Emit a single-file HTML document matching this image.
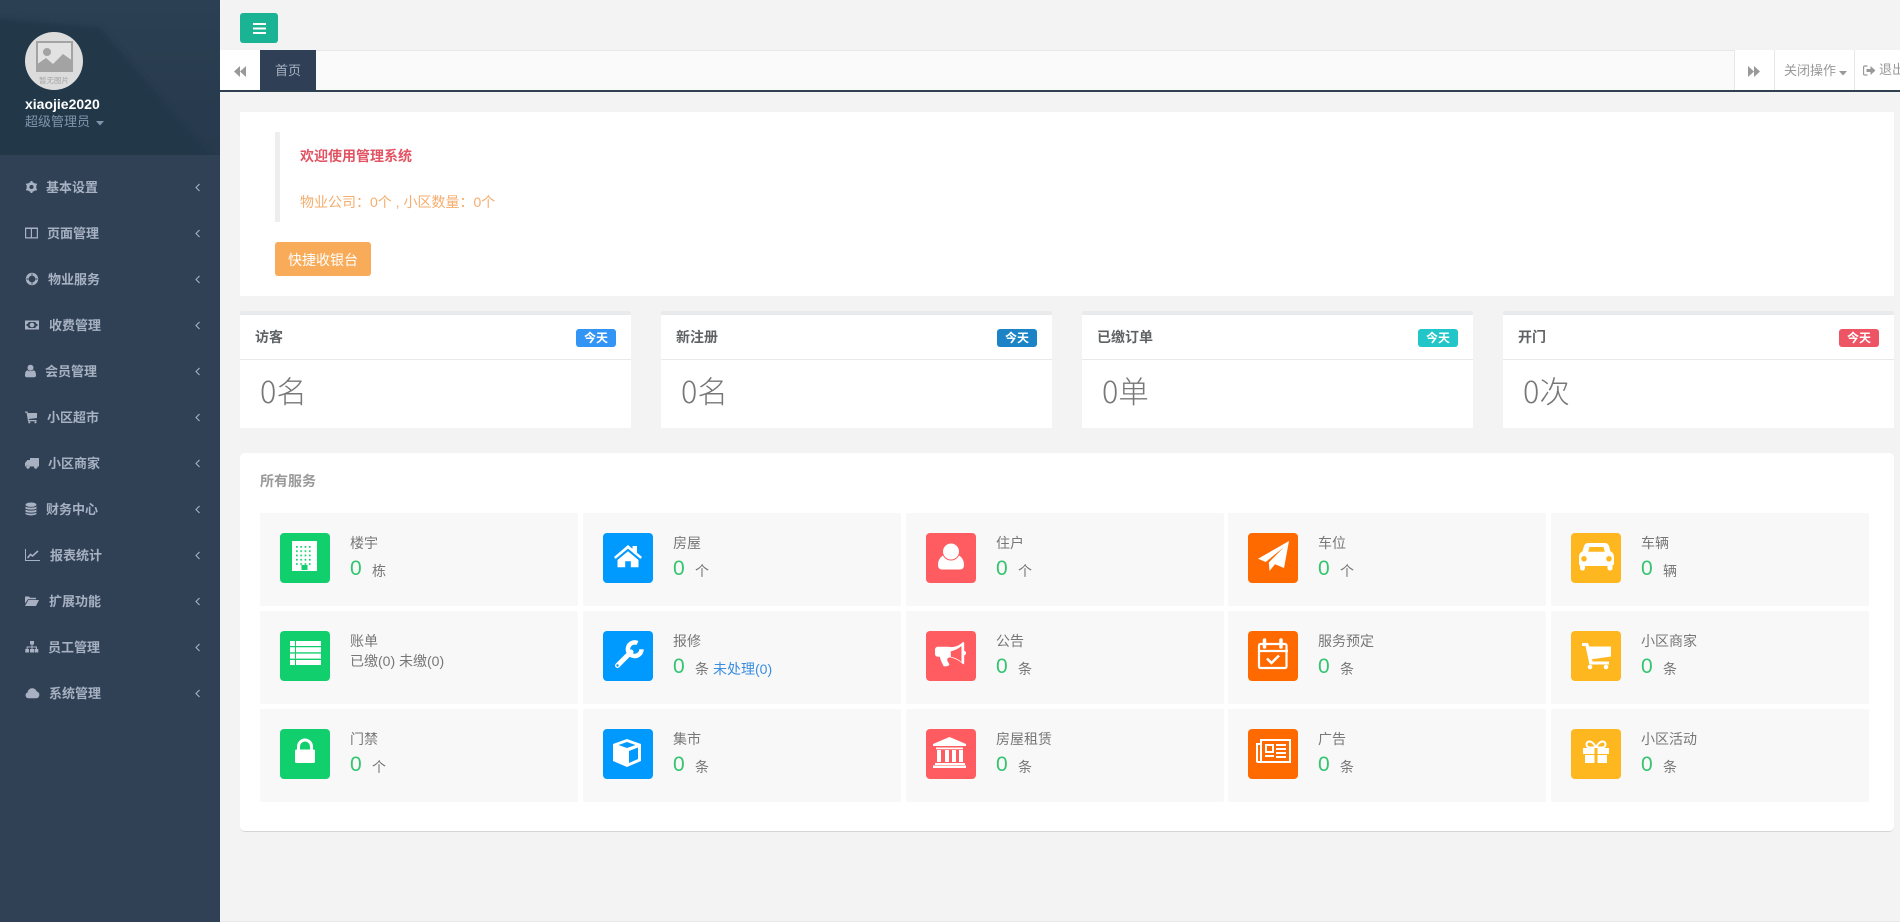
<!DOCTYPE html>
<html lang="zh-CN">
<head>
<meta charset="utf-8">
<title>管理系统</title>
<style>
*{box-sizing:border-box}
html,body{margin:0;padding:0;width:1900px;height:922px;overflow:hidden;background:#f3f3f4}
body{position:relative;font-family:"Liberation Sans","Noto Sans CJK SC",sans-serif;font-size:13px;color:#676a6c}
.a,.t{position:absolute}
.t{white-space:nowrap}
svg{display:block;position:absolute}
#side{position:absolute;left:0;top:0;width:220px;height:922px;background:#304156;overflow:hidden}
.m{position:absolute;left:0;width:220px;height:46px;color:#a7b1c2;font-weight:700;font-size:13px;line-height:47px}
.m span{position:absolute;white-space:nowrap}
.m svg{left:25px;top:16px;fill:#a7b1c2}
.m .ch{left:194.500px;top:19px;fill:none;stroke:#a7b1c2;stroke-width:1.1}
.card{position:absolute;top:311px;width:391px;height:117px;background:#fff;border-top:4px solid #e9eaeb;border-radius:2px 2px 0 0}
.card .h{position:absolute;left:0;right:0;top:0;height:45px;border-bottom:1px solid #e7eaec}
.card b{position:absolute;left:15px;top:12px;font-size:14px;line-height:20px;color:#5f6264}
.card i{position:absolute;right:15px;top:14px;width:40px;height:18px;border-radius:3px;color:#fff;font-style:normal;font-weight:700;font-size:12px;line-height:18px;text-align:center}
.card p{position:absolute;margin:0;left:20px;top:52px;font-family:"Noto Sans CJK SC",sans-serif;font-size:30.500px;line-height:46px;font-weight:200;color:#777;white-space:nowrap}
.cell{position:absolute;width:318px;height:93px;background:#f8f8f8;border-radius:2px}
.ic{position:absolute;left:20px;top:20px;width:50px;height:50px;border-radius:4px}
.ic svg{left:0;top:0;fill:#fff}
.lb{position:absolute;left:90px;top:20px;font-size:14px;line-height:20px;color:#777;white-space:nowrap}
.nm{position:absolute;left:90px;top:43px;font-size:21px;line-height:26px;color:#35c46f;white-space:nowrap}
.un{position:absolute;left:112px;top:48px;font-size:14px;line-height:20px;color:#777;white-space:nowrap}
.g{background:#12cf6e}.b{background:#0099fd}.r{background:#ff5c61}.o{background:#ff6a00}.y{background:#ffb71f}
</style>
</head>
<body>
<div id="side">
  <svg width="220" height="155" style="left:0;top:0"><defs><linearGradient id="hg" x1="0" y1="0" x2="0" y2="1"><stop offset="0" stop-color="#2b4053"/><stop offset="1" stop-color="#27394c"/></linearGradient><filter id="bl"><feGaussianBlur stdDeviation="2.500"/></filter></defs><rect width="220" height="155" fill="url(#hg)"/><polygon points="-5,18 100,27 215,160 -5,160" fill="#24384a" filter="url(#bl)"/></svg>
  <div class="a" style="left:25px;top:32px;width:58px;height:58px;border-radius:50%;background:#dcdcdc;overflow:hidden">
    <svg width="58" height="58" style="left:0;top:0"><rect x="12" y="10" width="35" height="29" fill="#e2e2e2" stroke="#a3a3a3" stroke-width="2"/><circle cx="22" cy="20" r="4" fill="#a3a3a3"/><polygon points="11,33 21,26 28,32 38,22 48,29 48,40 11,40" fill="#a3a3a3"/></svg>
    <span class="t" style="left:14px;top:44px;font-size:7.500px;line-height:10px;color:#a5a5a5">暂无图片</span>
  </div>
  <span class="t" style="left:25px;top:94px;font-size:14px;line-height:20px;font-weight:700;color:#fff">xiaojie2020</span>
  <span class="t" style="left:25px;top:112px;font-size:13px;line-height:20px;color:#8095ab">超级管理员</span>
  <svg width="8" height="5" style="left:96px;top:121px"><polygon points="0,0 8,0 4,4.500" fill="#8095ab"/></svg>

  <div class="m" style="top:164px"><svg width="14" height="14" viewBox="0 0 14 14"><circle cx="6.500" cy="7" r="3.600" fill="none" stroke="#a7b1c2" stroke-width="2.600"/><path d="M6.500 7L6.500 1M6.500 7L6.500 13M6.500 7L1.300 4M6.500 7L11.700 10M6.500 7L1.300 10M6.500 7L11.700 4" stroke="#a7b1c2" stroke-width="2" fill="none" stroke-dasharray="6 0"/><circle cx="6.500" cy="7" r="2" fill="#304156"/></svg><span style="left:46px">基本设置</span><svg class="ch" width="6" height="9"><polyline points="4.500,1 1,4.500 4.500,8"/></svg></div>
  <div class="m" style="top:210px"><svg width="14" height="14" viewBox="0 0 14 14"><path fill-rule="evenodd" d="M0 1.500h13v11H0zM1.200 3v8.300h4.600V3zM7 3v8.300h4.800V3z"/></svg><span style="left:47px">页面管理</span><svg class="ch" width="6" height="9"><polyline points="4.500,1 1,4.500 4.500,8"/></svg></div>
  <div class="m" style="top:256px"><svg width="14" height="14" viewBox="0 0 14 14"><circle cx="7" cy="7" r="4.800" fill="none" stroke="#a7b1c2" stroke-width="2.800"/><path d="M1.500 7h2M10.500 7h2M7 1.500v2M7 10.500v2" stroke="#304156" stroke-width=".9"/></svg><span style="left:48px">物业服务</span><svg class="ch" width="6" height="9"><polyline points="4.500,1 1,4.500 4.500,8"/></svg></div>
  <div class="m" style="top:302px"><svg width="14" height="14" viewBox="0 0 14 14"><path fill-rule="evenodd" d="M0 2.500h14v9H0zM3.500 4A1.800 1.800 0 0 1 1.500 6v2a1.800 1.800 0 0 1 2 2h7a1.800 1.800 0 0 1 2-2V6a1.800 1.800 0 0 1-2-2zM7 4.700a2.300 2.300 0 1 1 0 4.600 2.300 2.300 0 0 1 0-4.600z"/></svg><span style="left:49px">收费管理</span><svg class="ch" width="6" height="9"><polyline points="4.500,1 1,4.500 4.500,8"/></svg></div>
  <div class="m" style="top:348px"><svg width="12" height="14" viewBox="0 0 12 14"><circle cx="5.500" cy="3.800" r="3"/><path d="M0 11.500c0-3.500 1-5 2.500-5.300 1.600 1.300 4.400 1.300 6 0 1.500.3 2.500 1.800 2.500 5.300 0 1-.7 1.800-1.800 1.800H1.800C.7 13.300 0 12.500 0 11.500z"/></svg><span style="left:45px">会员管理</span><svg class="ch" width="6" height="9"><polyline points="4.500,1 1,4.500 4.500,8"/></svg></div>
  <div class="m" style="top:394px"><svg width="14" height="14" viewBox="0 0 14 14"><path d="M0 1.500h2.500l.4 1.500H12v5L3.800 9l.2 1h7.500v1.200H3L1.600 2.800H0z"/><circle cx="4.300" cy="12.300" r="1.100"/><circle cx="10.500" cy="12.300" r="1.100"/></svg><span style="left:47px">小区超市</span><svg class="ch" width="6" height="9"><polyline points="4.500,1 1,4.500 4.500,8"/></svg></div>
  <div class="m" style="top:440px"><svg width="14" height="14" viewBox="0 0 14 14"><path d="M5 2h9v8.500H4.500a1.800 1.800 0 0 0-3.500 0H0V7l2.500-3H5z"/><circle cx="3" cy="11" r="1.700"/><circle cx="10.800" cy="11" r="1.700"/></svg><span style="left:48px">小区商家</span><svg class="ch" width="6" height="9"><polyline points="4.500,1 1,4.500 4.500,8"/></svg></div>
  <div class="m" style="top:486px"><svg width="12" height="14" viewBox="0 0 12 14"><ellipse cx="6" cy="2.700" rx="5.500" ry="2.200"/><path d="M.5 4.500C1.500 6 10.500 6 11.500 4.500V6.500C10.500 8 1.500 8 .5 6.500z"/><path d="M.5 7.500C1.500 9 10.500 9 11.500 7.500V9.500C10.500 11 1.500 11 .5 9.500z"/><path d="M.5 10.500C1.500 12 10.500 12 11.500 10.500V11.800C10.500 14 1.500 14 .5 11.800z"/></svg><span style="left:46px">财务中心</span><svg class="ch" width="6" height="9"><polyline points="4.500,1 1,4.500 4.500,8"/></svg></div>
  <div class="m" style="top:532px"><svg width="15" height="14" viewBox="0 0 15 14"><path d="M0 1h1v11h14v1H0z"/><path d="M2.500 10l3-3.500 2 1.500L13 3" fill="none" stroke="#a7b1c2" stroke-width="1.600"/></svg><span style="left:50px">报表统计</span><svg class="ch" width="6" height="9"><polyline points="4.500,1 1,4.500 4.500,8"/></svg></div>
  <div class="m" style="top:578px"><svg width="14" height="14" viewBox="0 0 14 14"><path d="M0 2.500h4l1 1.300h6v1.500H3L0 9.500z"/><path d="M3.400 6H14l-3 6H0z"/></svg><span style="left:49px">扩展功能</span><svg class="ch" width="6" height="9"><polyline points="4.500,1 1,4.500 4.500,8"/></svg></div>
  <div class="m" style="top:624px"><svg width="14" height="14" viewBox="0 0 14 14"><path d="M5 1h4v3.500H7.500V6.500h4.500V9h1.300v3.500h-3.700V9h1.200V7.500H7.500V9H9v3.500H5V9h1.500V7.500h-3.800V9H4v3.500H.3V9h1.300V6.500h4.900V4.500H5z"/></svg><span style="left:48px">员工管理</span><svg class="ch" width="6" height="9"><polyline points="4.500,1 1,4.500 4.500,8"/></svg></div>
  <div class="m" style="top:670px"><svg width="15" height="14" viewBox="0 0 15 14"><path d="M3.500 12.300a3 3 0 0 1-1-5.800 4.800 4.800 0 0 1 9.300-1 3.500 3.500 0 0 1-.3 6.800z"/></svg><span style="left:49px">系统管理</span><svg class="ch" width="6" height="9"><polyline points="4.500,1 1,4.500 4.500,8"/></svg></div>
</div>

<!-- top toggle -->
<div class="a" style="left:240px;top:13px;width:38px;height:30px;background:#1ab394;border-radius:3px"></div>
<svg width="13" height="12" style="left:253px;top:23px"><rect width="13" height="2" fill="#fff"/><rect y="4.500" width="13" height="2" fill="#fff"/><rect y="9" width="13" height="2" fill="#fff"/></svg>

<!-- tab bar -->
<div class="a" style="left:220px;top:50px;width:1680px;height:42px;background:#fafafa;border-top:1px solid #e7e7e7;border-bottom:2px solid #2f4050"></div>
<div class="a" style="left:220px;top:50px;width:40px;height:40px;background:#fff"></div>
<svg width="13" height="11" style="left:234px;top:66px"><polygon points="0,5.500 6,0 6,11" fill="#999"/><polygon points="6,5.500 12,0 12,11" fill="#999"/></svg>
<div class="a" style="left:260px;top:50px;width:56px;height:40px;background:#2f4056;color:#a7b1c2;font-size:13px;line-height:41px;text-align:center">首页</div>
<div class="a" style="left:1734px;top:50px;width:40px;height:40px;background:#fff;border-left:1px solid #e7e7e7"></div>
<svg width="13" height="11" style="left:1748px;top:66px"><polygon points="0,0 6,5.500 0,11" fill="#999"/><polygon points="6,0 12,5.500 6,11" fill="#999"/></svg>
<div class="a" style="left:1774px;top:50px;width:80px;height:40px;background:#fff;border-left:1px solid #e7e7e7"></div>
<span class="t" style="left:1784px;top:61px;font-size:13px;line-height:20px;color:#999">关闭操作</span>
<svg width="8" height="5" style="left:1839px;top:71px"><polygon points="0,0 8,0 4,4.500" fill="#999"/></svg>
<div class="a" style="left:1854px;top:50px;width:46px;height:40px;background:#fff;border-left:1px solid #e7e7e7"></div>
<svg width="13" height="11" viewBox="0 0 13 11" style="left:1863px;top:65px"><path d="M4.500 1H1.800C1 1 .5 1.500.5 2.300v6.400C.5 9.500 1 10 1.800 10h2.700" fill="none" stroke="#999" stroke-width="1.300"/><path d="M3.500 4h4V1L12.500 5.500 7.500 10V7h-4z" fill="#999"/></svg>
<span class="t" style="left:1879px;top:60px;font-size:13px;line-height:20px;color:#999">退出</span>

<!-- welcome panel -->
<div class="a" style="left:240px;top:112px;width:1654px;height:184px;background:#fff"></div>
<div class="a" style="left:275px;top:132px;width:5px;height:90px;background:#eee"></div>
<span class="t" style="left:300px;top:146px;font-size:14px;line-height:20px;font-weight:700;color:#e25463">欢迎使用管理系统</span>
<span class="t" style="left:300px;top:192px;font-size:14px;line-height:20px;color:#f4ad6c">物业公司：0个 , 小区数量：0个</span>
<div class="a" style="left:275px;top:242px;width:96px;height:34px;border-radius:3px;background:#f8ac59;color:#fff;font-size:14px;line-height:36px;text-align:center">快捷收银台</div>

<!-- stat cards -->
<div class="card" style="left:240px"><div class="h"></div><b>访客</b><i style="background:#3295f6">今天</i><p>0名</p></div>
<div class="card" style="left:661px"><div class="h"></div><b>新注册</b><i style="background:#1c84c6">今天</i><p>0名</p></div>
<div class="card" style="left:1082px"><div class="h"></div><b>已缴订单</b><i style="background:#23c6c8">今天</i><p>0单</p></div>
<div class="card" style="left:1503px"><div class="h"></div><b>开门</b><i style="background:#ed5565">今天</i><p>0次</p></div>

<!-- services panel -->
<div class="a" style="left:240px;top:453px;width:1654px;height:379px;background:#fff;border-radius:5px;border-bottom:1px solid #d5d5d5"></div>
<span class="t" style="left:260px;top:471px;font-size:14px;line-height:20px;font-weight:700;color:#999">所有服务</span>

<!-- Row 1 -->
<div class="cell" style="left:260px;top:513px"><div class="ic g"><svg width="50" height="50" viewBox="0 0 50 50"><defs><pattern id="dots" width="4.300" height="4.300" patternUnits="userSpaceOnUse" x="16" y="13"><rect width="1.700" height="1.700" fill="#12cf6e"/></pattern></defs><rect x="12" y="8" width="25" height="30"/><rect x="16" y="13" width="17" height="21" fill="url(#dots)"/><rect x="21.500" y="32" width="6" height="5" fill="#12cf6e"/></svg></div><span class="lb">楼宇</span><span class="nm">0</span><span class="un">栋</span></div>
<div class="cell" style="left:583px;top:513px"><div class="ic b"><svg width="50" height="50" viewBox="0 0 50 50"><path d="M25 12L11 24l1.600 1.900L25 15.600l12.400 10.300L39 24l-5-4.300V13h-4.500v2.800z"/><path d="M25 18.300L14.500 27v7.300h7.700v-6h5.600v6h7.700V27z"/></svg></div><span class="lb">房屋</span><span class="nm">0</span><span class="un">个</span></div>
<div class="cell" style="left:906px;top:513px"><div class="ic r"><svg width="50" height="50" viewBox="0 0 50 50"><path d="M12 32c0-5 2.500-8.500 6-10 3.600 3.600 10.400 3.600 14 0 3.500 1.500 6 5 6 10 0 3-1.700 4.500-4 4.500H16c-2.300 0-4-1.500-4-4.500z"/><circle cx="25" cy="18.500" r="8.500" stroke="#ff5c61" stroke-width="1"/></svg></div><span class="lb">住户</span><span class="nm">0</span><span class="un">个</span></div>
<div class="cell" style="left:1228px;top:513px"><div class="ic o"><svg width="50" height="50" viewBox="0 0 50 50"><path d="M41 8L36 35l-9-3.800L21.500 38l-.7-8.500L36 14 17.800 29 10 25.800z"/></svg></div><span class="lb">车位</span><span class="nm">0</span><span class="un">个</span></div>
<div class="cell" style="left:1551px;top:513px"><div class="ic y"><svg width="50" height="50" viewBox="0 0 50 50"><path fill-rule="evenodd" d="M17 10h17c2 0 3.300 1 4 3l1.500 5.500c2.300.8 3.500 3 3.500 5.500v6c0 1.200-.5 2-1.500 2.500V35c0 1.500-1 2.500-2.500 2.500s-2.500-1-2.500-2.500v-2H14v2c0 1.500-1 2.500-2.500 2.500S9 36.500 9 35v-2.500C8 32 8 31 8 30v-6c0-2.500 1.200-4.700 3.500-5.500L13 13c.7-2 2-3 4-3zM18.500 14l-1.300 4.800h16.600L32.500 14zM13 23a2.800 2.800 0 1 0 0 5.600 2.800 2.800 0 0 0 0-5.600zM38 23a2.800 2.800 0 1 0 0 5.600 2.800 2.800 0 0 0 0-5.600z"/></svg></div><span class="lb">车辆</span><span class="nm">0</span><span class="un">辆</span></div>

<!-- Row 2 -->
<div class="cell" style="left:260px;top:611px"><div class="ic g"><svg width="50" height="50" viewBox="0 0 50 50"><path d="M10 10h5v5h-5zM16 10h25v5H16zM10 16.300h5v5h-5zM16 16.300h25v5H16zM10 22.600h5v5h-5zM16 22.600h25v5H16zM10 29h5v5h-5zM16 29h25v5H16z"/></svg></div><span class="lb">账单</span><span class="t" style="left:90px;top:40px;font-size:14px;line-height:20px;color:#777">已缴(0) 未缴(0)</span></div>
<div class="cell" style="left:583px;top:611px"><div class="ic b"><svg width="50" height="50" viewBox="0 0 50 50"><path d="M14.500 34.500L28 21" fill="none" stroke="#fff" stroke-width="5" stroke-linecap="round"/><path d="M34.500 12a6.800 6.800 0 1 0 4 6.300" fill="none" stroke="#fff" stroke-width="4.500"/><circle cx="14.500" cy="34.500" r="1.200" fill="#0099fd"/></svg></div><span class="lb">报修</span><span class="nm">0</span><span class="un">条</span><span class="t" style="left:130px;top:48px;font-size:14px;line-height:20px;color:#3a8ee0">未处理(0)</span></div>
<div class="cell" style="left:906px;top:611px"><div class="ic r"><svg width="50" height="50" viewBox="0 0 50 50"><path fill-rule="evenodd" d="M37 11c.8 0 1.200.6 1.200 1.500v7.300c1.100.4 1.800 1.200 1.800 2.300s-.7 1.900-1.800 2.300v7.300c0 .9-.4 1.500-1.200 1.500-4-4-9-6.300-13.500-6.800-1.500.5-2.500 1-2.200 3 .2 2 2 2.500 2 4.500-1 1.500-5 2-6 .8-1.500-3.500-3-6-3.500-9H12c-1.800 0-3-1.200-3-3v-4c0-1.800 1.200-3 3-3h10.500C27 17 33 15 37 11zM35.500 15c-3.500 3-7 4.500-10.700 5.300v5.500c3.700.7 7.200 2.300 10.700 5.200z"/></svg></div><span class="lb">公告</span><span class="nm">0</span><span class="un">条</span></div>
<div class="cell" style="left:1228px;top:611px"><div class="ic o"><svg width="50" height="50" viewBox="0 0 50 50"><rect x="11" y="13" width="27.500" height="24" rx="1.500" fill="none" stroke="#fff" stroke-width="2.200"/><path d="M10 20h30" stroke="#fff" stroke-width="2.200"/><path d="M16.500 9v7M33 9v7" stroke="#fff" stroke-width="3.500" stroke-linecap="round"/><path d="M19 27.500l4.500 4.500 7.500-7.500" fill="none" stroke="#fff" stroke-width="2.500"/></svg></div><span class="lb">服务预定</span><span class="nm">0</span><span class="un">条</span></div>
<div class="cell" style="left:1551px;top:611px"><div class="ic y"><svg width="50" height="50" viewBox="0 0 50 50"><path d="M11 12h6l1.200 3.500H40v10l-19 2.800.5 2.200H38v3H18.500L14.500 15H11z"/><circle cx="19" cy="36" r="2.300"/><circle cx="35" cy="36" r="2.300"/></svg></div><span class="lb">小区商家</span><span class="nm">0</span><span class="un">条</span></div>

<!-- Row 3 -->
<div class="cell" style="left:260px;top:709px"><div class="ic g"><svg width="50" height="50" viewBox="0 0 50 50"><path d="M18.500 22v-4.500a6.500 6.500 0 0 1 13 0V22" fill="none" stroke="#fff" stroke-width="3"/><rect x="15" y="20.500" width="20" height="13.500" rx="1.500"/></svg></div><span class="lb">门禁</span><span class="nm">0</span><span class="un">个</span></div>
<div class="cell" style="left:583px;top:709px"><div class="ic b"><svg width="50" height="50" viewBox="0 0 50 50"><path fill-rule="evenodd" d="M24 10l14 5v17l-14 6-14-6V15zM24 13l-8.500 3 8.500 3 8.500-3zM26 22v12l9-4V18.500z"/></svg></div><span class="lb">集市</span><span class="nm">0</span><span class="un">条</span></div>
<div class="cell" style="left:906px;top:709px"><div class="ic r"><svg width="50" height="50" viewBox="0 0 50 50"><path d="M23.500 8L40 15v2H7v-2zM10 18.500h27v1.800H10z"/><path d="M11 21h4v12h-4zM19 21h4v12h-4zM26 21h4v12h-4zM33 21h4v12h-4zM9 34h30v2H9zM7 36.500h33V39H7z"/></svg></div><span class="lb">房屋租赁</span><span class="nm">0</span><span class="un">条</span></div>
<div class="cell" style="left:1228px;top:709px"><div class="ic o"><svg width="50" height="50" viewBox="0 0 50 50"><path fill-rule="evenodd" d="M12 10h31v24H10c-1.200 0-2-.8-2-2V14h4zM10 16v16h2V16zM14 12v20h27V12z"/><path fill-rule="evenodd" d="M17 15h9v9h-9zM19 17v5h5v-5z"/><path d="M28 15h10v2H28zM28 19h10v2H28zM28 23h10v2H28zM17 26h9v2h-9zM28 27h10v2H28z"/></svg></div><span class="lb">广告</span><span class="nm">0</span><span class="un">条</span></div>
<div class="cell" style="left:1551px;top:709px"><div class="ic y"><svg width="50" height="50" viewBox="0 0 50 50"><path d="M12 19h26v6H12zM14 26h22v8H14z"/><path d="M25 18.500c-2-4-4-6-6.500-6-2 0-3 1.300-3 3 0 2 1.500 3 3.500 3zM25 18.500c2-4 4-6 6.500-6 2 0 3 1.300 3 3 0 2-1.500 3-3.500 3z" fill="none" stroke="#fff" stroke-width="2"/><rect x="23.500" y="19" width="3" height="15" fill="#ffb71f"/></svg></div><span class="lb">小区活动</span><span class="nm">0</span><span class="un">条</span></div>

<div class="a" style="left:220px;top:921px;width:1680px;height:1px;background:#e7eaec"></div>
</body>
</html>
